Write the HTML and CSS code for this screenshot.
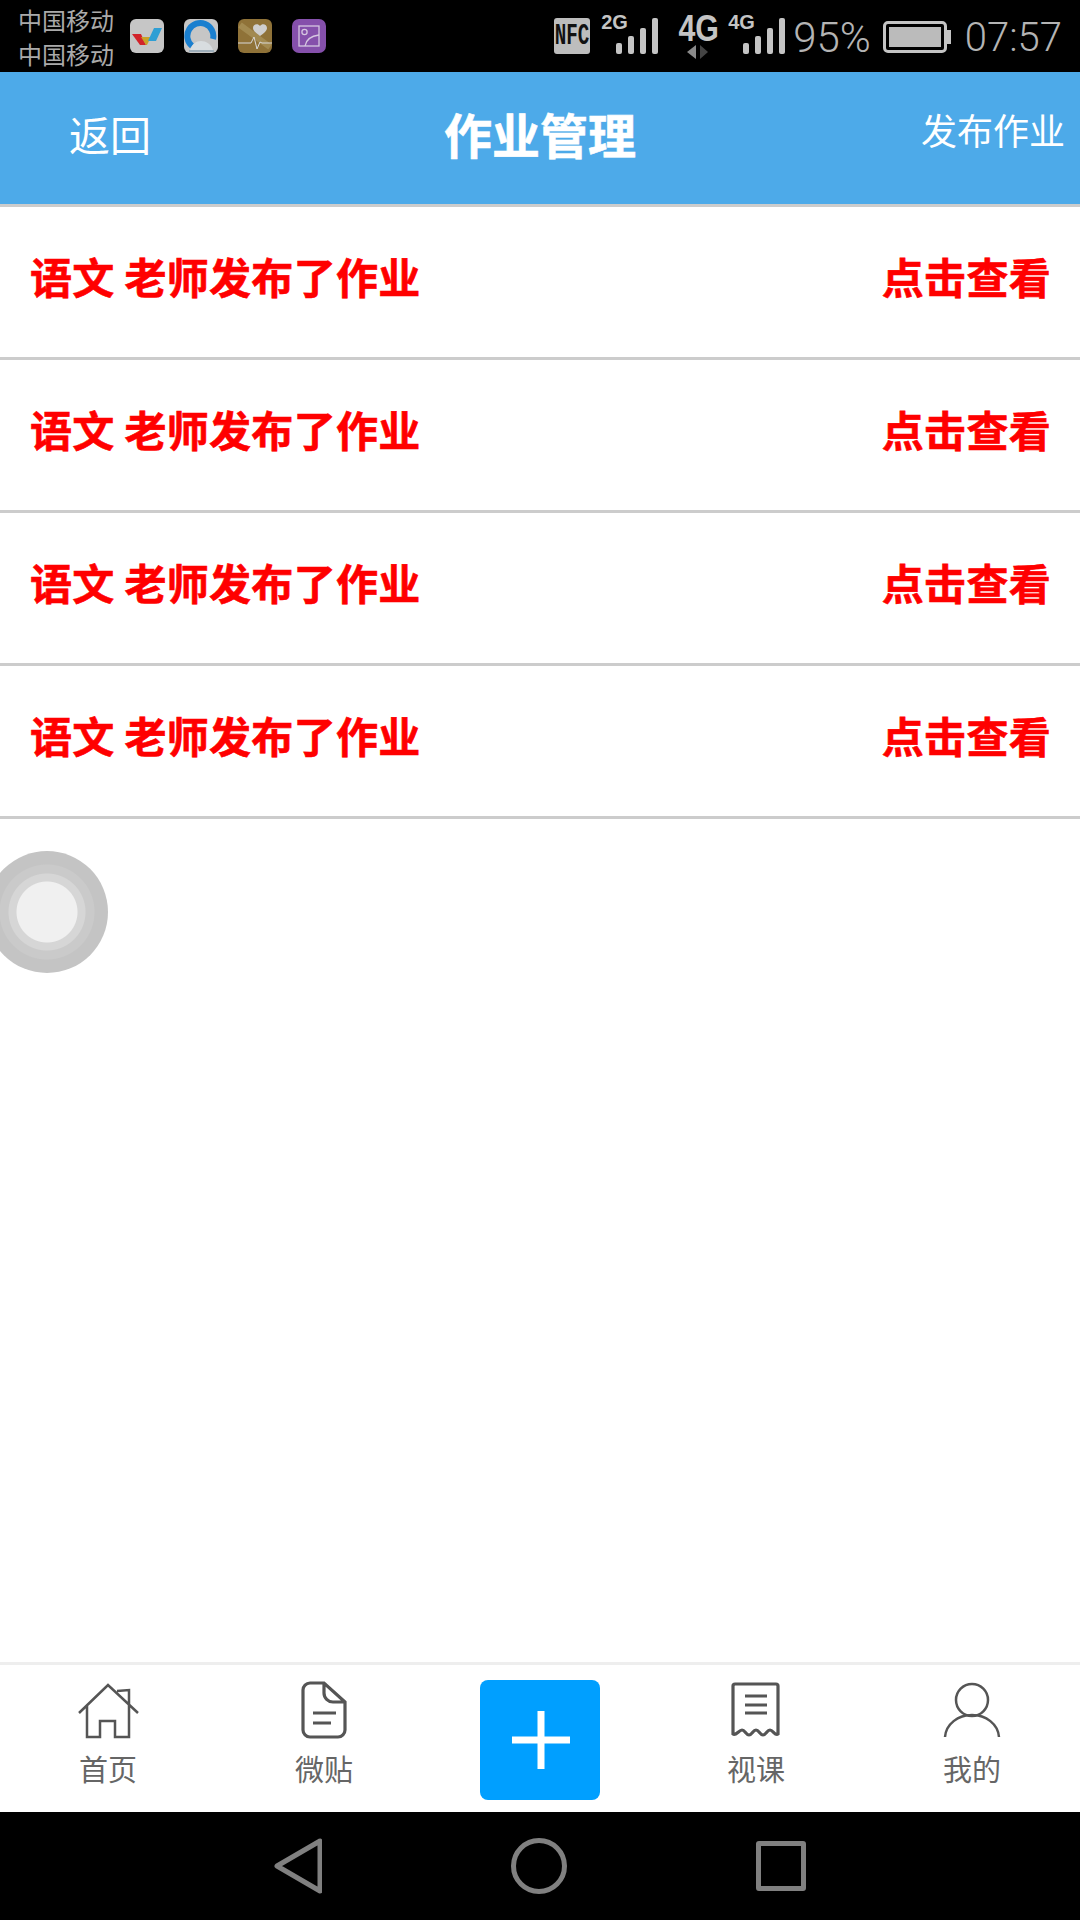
FILE: index.html
```html
<!DOCTYPE html>
<html>

<head>
  <title>作业管理</title>
  <link rel="stylesheet" href="styles.css">
</head>

<body>
  <div class="status-bar">
    <div class="carriers">
      <span>中国移动</span>
      <span>中国移动</span>
    </div>
    <div class="app-icons">
      <svg class="app-icon" viewBox="0 0 34 34">
        <rect width="34" height="34" rx="6" fill="#c6c6c6"/>
        <path d="M2 15h9l5 11h-6z" fill="#d2232a"/>
        <path d="M11 18h10l-4 8h-1z" fill="#c9a227"/>
        <path d="M24 9h8l-6 13h-8z" fill="#2f9fd4"/>
      </svg>
      <svg class="app-icon" viewBox="0 0 34 34">
        <rect width="34" height="34" rx="6" fill="#c6c6c6"/>
        <path d="M8 27A13 13 0 1 1 29 20" fill="none" stroke="#1a7fcf" stroke-width="6"/>
        <path d="M6 31c2-6 6-9 11-9 5 0 10 3 12 9z" fill="#d8dde0"/>
        <path d="M5 32h25" stroke="#8fa4b4" stroke-width="1.5"/>
      </svg>
      <svg class="app-icon" viewBox="0 0 34 34">
        <rect width="34" height="34" rx="6" fill="#8f7238"/>
        <path d="M2 6l30 22" stroke="#b09a62" stroke-width="6" opacity="0.6"/>
        <path d="M22 17c-4-3-7-5-7-8 0-4 5-5 7-2 2-3 7-2 7 2 0 3-3 5-7 8z" fill="#cfcfcf"/>
        <path d="M0 24h13l3-6 3 12 3-7 2 1h10" fill="none" stroke="#d8d8d8" stroke-width="1"/>
      </svg>
      <svg class="app-icon" viewBox="0 0 34 34">
        <rect width="34" height="34" rx="7" fill="#8550ab"/>
        <rect x="7" y="7" width="20" height="20" fill="none" stroke="#d5c6e0" stroke-width="1.3"/>
        <circle cx="12.5" cy="13" r="2.6" fill="none" stroke="#d5c6e0" stroke-width="1.3"/>
        <path d="M13 27c1-6 6-10 14-11" fill="none" stroke="#d5c6e0" stroke-width="1.3"/>
      </svg>
    </div>
    <div class="indicators">
      <div class="nfc"><span class="nfc-text">NFC</span></div>
      <div class="signal">
        <span class="net-text">2G</span>
        <svg class="bars" viewBox="0 0 58 48">
          <rect x="15" y="31" width="6" height="11" rx="2"/>
          <rect x="27" y="24" width="6" height="18" rx="2"/>
          <rect x="39" y="16" width="6" height="26" rx="2"/>
          <rect x="51" y="6" width="6" height="36" rx="2"/>
        </svg>
      </div>
      <div class="net-big">
        <span class="net-big-text">4G</span>
        <svg class="arrows" viewBox="0 0 38 14">
          <path d="M17 0v14l-9-7z" fill="#8a8a8a"/>
          <path d="M21 0v14l8-7z" fill="#444"/>
        </svg>
      </div>
      <div class="signal">
        <span class="net-text">4G</span>
        <svg class="bars" viewBox="0 0 58 48">
          <rect x="15" y="31" width="6" height="11" rx="2"/>
          <rect x="27" y="24" width="6" height="18" rx="2"/>
          <rect x="39" y="16" width="6" height="26" rx="2"/>
          <rect x="51" y="6" width="6" height="36" rx="2"/>
        </svg>
      </div>
      <span class="battery-text">95%</span>
      <div class="battery">
        <div class="battery-fill"></div>
      </div>
      <span class="time">07:57</span>
    </div>
  </div>

  <div class="header">
    <span class="back">返回</span>
    <span class="title">作业管理</span>
    <span class="publish">发布作业</span>
  </div>

  <div class="list">
    <div class="row"><span>语文 老师发布了作业</span><span>点击查看</span></div>
    <div class="row"><span>语文 老师发布了作业</span><span>点击查看</span></div>
    <div class="row"><span>语文 老师发布了作业</span><span>点击查看</span></div>
    <div class="row"><span>语文 老师发布了作业</span><span>点击查看</span></div>
  </div>

  <div class="float-ball"></div>

  <div class="tabs">
    <div class="tab">
      <svg class="tab-icon" viewBox="0 0 64 60">
        <path d="M3 33L32 5l30 28M41 11l12-1v15M11 25v32h13V41h15v16h14V25"/>
      </svg>
      <span>首页</span>
    </div>
    <div class="tab">
      <svg class="tab-icon" viewBox="0 0 64 60">
        <path class="thick" d="M32 3H18a7 7 0 0 0-7 7v40a7 7 0 0 0 7 7h28a7 7 0 0 0 7-7V22zM32 3v10a9 9 0 0 0 9 9h12M21 33h23M21 43h18"/>
      </svg>
      <span>微贴</span>
    </div>
    <div class="tab">
      <div class="add-btn">
        <svg class="add-icon" viewBox="0 0 58 58">
          <path d="M29 0v58M0 29h58"/>
        </svg>
      </div>
    </div>
    <div class="tab">
      <svg class="tab-icon" viewBox="0 0 64 60">
        <path class="thick" d="M9 54V6a2 2 0 0 1 2-2h41a2 2 0 0 1 2 2v48c-3 2-5-4-8-4s-4 5-7 5-4-5-7-5-4 5-7 5-4-5-7-5-6 6-9 4zM21 16h22M21 25h22M21 33h22"/>
      </svg>
      <span>视课</span>
    </div>
    <div class="tab">
      <svg class="tab-icon" viewBox="0 0 64 60">
        <circle cx="32" cy="20" r="16"/>
        <path d="M5 57c1-13 13-22 27-22s26 9 27 22"/>
      </svg>
      <span>我的</span>
    </div>
  </div>

  <div class="nav-bar">
    <svg class="nav-back" viewBox="0 0 48 56">
      <path d="M46 3v50L3 28z"/>
    </svg>
    <div class="nav-home"></div>
    <div class="nav-recent"></div>
  </div>
</body>

</html>
```

FILE: styles.css
```css
*{
    box-sizing: border-box;
}
body{
    margin: 0;
    width: 1080px;
    height: 1920px;
    position: relative;
    overflow: hidden;
    display: flex;
    flex-direction: column;
    background-color: white;
    font-family: "Noto Sans CJK SC", "Noto Sans", sans-serif;
}

.status-bar{
    height: 72px;
    background-color: black;
    display: flex;
    align-items: center;
    padding-left: 18px;
    padding-right: 18px;
}
.carriers{
    display: flex;
    flex-direction: column;
    padding-top: 2px;
    font-size: 24px;
    line-height: 34px;
    color: #aaa;
}
.app-icons{
    display: flex;
    gap: 20px;
    margin-left: 16px;
}
.app-icon{
    width: 34px;
    height: 34px;
}
.indicators{
    margin-left: auto;
    display: flex;
    align-items: center;
    color: #b4b4b4;
}
.nfc{
    width: 36px;
    height: 36px;
    border-radius: 3px;
    background-color: #bdbdbd;
    display: flex;
    justify-content: center;
    align-items: center;
    overflow: hidden;
}
.nfc-text{
    font-family: "Liberation Mono", monospace;
    font-size: 30px;
    font-weight: bold;
    color: #111;
    transform: scaleX(0.64);
}
.signal{
    width: 58px;
    height: 48px;
    margin-left: 11px;
    position: relative;
}
.bars{
    display: block;
    width: 58px;
    height: 48px;
    fill: #c4c4c4;
}
.net-text{
    position: absolute;
    left: 0;
    top: 0;
    font-family: "Liberation Sans", sans-serif;
    font-size: 20px;
    line-height: 20px;
    font-weight: bold;
    color: #c4c4c4;
}
.net-big{
    width: 38px;
    margin-left: 20px;
    display: flex;
    flex-direction: column;
    align-items: center;
    color: #c4c4c4;
}
.net-big-text{
    font-family: "Liberation Sans", sans-serif;
    font-size: 37px;
    line-height: 32px;
    font-weight: bold;
    transform: scaleX(0.82);
}
.arrows{
    width: 38px;
    height: 14px;
}
.battery-text{
    font-family: Roboto, sans-serif;
    font-weight: 300;
    font-size: 42px;
    margin-left: 7px;
    margin-top: 2px;
}
.battery{
    width: 64px;
    height: 32px;
    margin-left: 12px;
    margin-right: 4px;
    margin-top: 2px;
    border: 3px solid #c4c4c4;
    border-radius: 5px;
    padding: 3px;
    position: relative;
}
.battery::after{
    content: "";
    position: absolute;
    right: -7px;
    top: 6px;
    width: 4px;
    height: 14px;
    background-color: #c4c4c4;
}
.battery-fill{
    height: 100%;
    background-color: #bbb;
}
.time{
    font-family: Roboto, sans-serif;
    font-weight: 300;
    font-size: 40px;
    margin-left: 14px;
    margin-top: 2px;
}

.header{
    height: 135px;
    background-color: #4daae9;
    border-bottom: 3px solid #ccc;
    color: white;
    display: grid;
    grid-template-columns: 1fr auto 1fr;
    align-items: center;
    padding: 0 15px 10px 15px;
}
.back{
    font-size: 41px;
    margin-left: 54px;
}
.title{
    font-size: 48px;
    font-weight: bold;
    -webkit-text-stroke: 0.6px white;
}
.publish{
    font-size: 36px;
    text-align: right;
    margin-bottom: 8px;
}

.list{
    flex: 1;
}
.row{
    height: 153px;
    border-bottom: 3px solid #ccc;
    padding: 0 29px 13px 30px;
    display: flex;
    justify-content: space-between;
    align-items: center;
    color: red;
    font-size: 42px;
    font-weight: bold;
    letter-spacing: 0.3px;
    -webkit-text-stroke: 0.6px red;
}

.float-ball{
    position: absolute;
    left: -14px;
    top: 851px;
    width: 122px;
    height: 122px;
    border-radius: 50%;
    background: radial-gradient(circle, #f0f0f0 30px, #d6d6d6 31px, #d6d6d6 38px, #cacaca 39px, #cacaca 47px, #c4c4c4 48px);
}

.tabs{
    height: 150px;
    border-top: 3px solid #eee;
    padding-top: 15px;
    display: grid;
    grid-template-columns: repeat(5, 216px);
}
.tab{
    display: flex;
    flex-direction: column;
    align-items: center;
    font-size: 29px;
    line-height: 34px;
    color: #666;
}
.tab-icon{
    width: 64px;
    height: 60px;
    margin-bottom: 11px;
    fill: none;
    stroke: #555;
    stroke-width: 2.5;
}
.tab-icon .thick{
    stroke-width: 3.2;
}
.add-btn{
    width: 120px;
    height: 120px;
    border-radius: 8px;
    background-color: #009fff;
    display: flex;
    justify-content: center;
    align-items: center;
    padding-left: 2px;
}
.add-icon{
    width: 58px;
    height: 58px;
    fill: none;
    stroke: white;
    stroke-width: 7;
}

.nav-bar{
    height: 108px;
    background-color: black;
    display: flex;
    justify-content: center;
    align-items: center;
    gap: 189px;
}
.nav-back{
    width: 48px;
    height: 56px;
    fill: none;
    stroke: #808080;
    stroke-width: 5;
    stroke-linejoin: round;
}
.nav-home{
    width: 56px;
    height: 56px;
    border: 5px solid #808080;
    border-radius: 50%;
}
.nav-recent{
    width: 50px;
    height: 50px;
    border: 5px solid #808080;
    border-radius: 3px;
}
```
